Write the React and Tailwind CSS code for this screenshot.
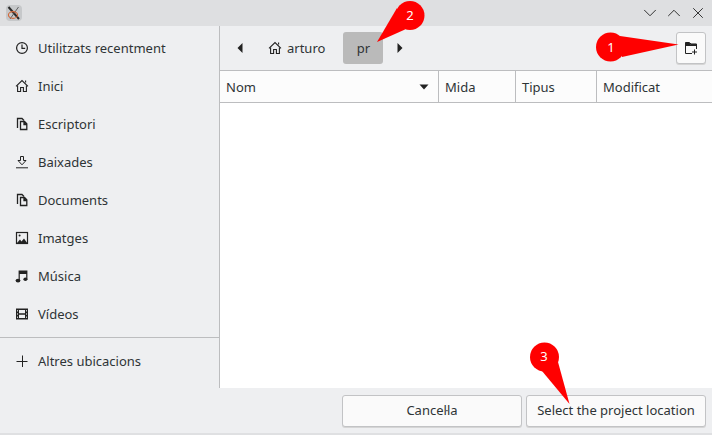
import React from 'react';
import { X, ChevronDown, ChevronUp } from 'lucide-react';

function ClockIcon() {
  return (
    <svg width="14" height="14" viewBox="0 0 14 14" fill="none" stroke="#222" strokeWidth="1.2">
      <circle cx="7" cy="7" r="5.4" />
      <path d="M7 3.5V7.3H10.2" />
    </svg>
  );
}

function HomeIcon() {
  return (
    <svg width="14" height="14" viewBox="0 0 14 14" fill="none" stroke="#222" strokeWidth="1.1">
      <path d="M1 7.3L7 1.5L13 7.3" />
      <path d="M2.6 6.5V12.5H5.6V8.5H8.4V12.5H11.4V6.5" />
      <path d="M10.6 1.5V3.6" />
    </svg>
  );
}

function CopyIcon() {
  return (
    <svg width="14" height="14" viewBox="0 0 14 14" fill="none" stroke="#222" strokeWidth="1.3">
      <path d="M2.5 11V1.5H7L9 3.5" />
      <path d="M5.5 12.5V4.5H9.5L11.8 6.8V12.5Z" />
      <path d="M9 4.5V7.5H12" fill="#222" />
    </svg>
  );
}

function DownloadIcon() {
  return (
    <svg width="14" height="14" viewBox="0 0 14 14" fill="none" stroke="#222" strokeWidth="1">
      <path d="M1 12.8H13" />
      <path d="M5.5 1.5H8.5V5.5H11L7 9.8L3 5.5H5.5Z" />
    </svg>
  );
}

function ImageIcon() {
  return (
    <svg width="14" height="14" viewBox="0 0 14 14" fill="none" stroke="#222" strokeWidth="1.2">
      <rect x="1.5" y="1.5" width="11" height="11" />
      <circle cx="4.6" cy="4.6" r="1" fill="#222" stroke="none" />
      <path d="M2 12L5 8.5L6.5 10.5L9 7.5L12.2 12Z" fill="#222" stroke="none" />
    </svg>
  );
}

function MusicIcon() {
  return (
    <svg width="14" height="14" viewBox="0 0 14 14" fill="#222">
      <path d="M3.6 1.5H12.4V10.5H11.2V5H4.8V11.8H3.6Z" />
      <ellipse cx="3" cy="11.6" rx="2.4" ry="1.9" />
      <ellipse cx="10.4" cy="10.2" rx="2" ry="1.7" />
    </svg>
  );
}

function FilmIcon() {
  return (
    <svg width="14" height="14" viewBox="0 0 14 14" fill="#222">
      <path fillRule="evenodd" d="M1 1.5H13V12.5H1ZM4 3V6.2H10V3ZM4 7.8V11H10V7.8ZM2.2 3V4.6H3V3ZM11 3V4.6H11.8V3ZM2.2 9.4V11H3V9.4ZM11 9.4V11H11.8V9.4ZM2.2 6.2V7.8H3V6.2ZM11 6.2V7.8H11.8V6.2Z" />
    </svg>
  );
}

function PlusIcon() {
  return (
    <svg width="14" height="14" viewBox="0 0 14 14" fill="none" stroke="#222" strokeWidth="1">
      <path d="M1.5 7.5H12.5M7.5 1.5V13" />
    </svg>
  );
}

function NewFolderIcon() {
  return (
    <svg width="14" height="14" viewBox="0 0 14 14" fill="none" stroke="#222" strokeWidth="1">
      <path d="M8 12.5H1.5V1.5H5.5L7 3H12.5V8" />
      <path d="M1.5 4.5H12.5V3.4H6.5L5.2 2H1.5Z" fill="#222" />
      <path d="M10.5 8.5V13.5M8 11H13" />
    </svg>
  );
}

function AppLogo() {
  return (
    <div className="w-4 h-4 bg-[#c6c8ca] rounded-sm flex items-center justify-center">
      <svg width="16" height="16" viewBox="0 0 16 16" fill="none">
        <path d="M2.5 2L13 14" stroke="#2a2a2a" strokeWidth="2" />
        <path d="M12.5 2L4 14" stroke="#555" strokeWidth="0.9" />
        <ellipse cx="7" cy="10" rx="4.6" ry="3.4" stroke="#d2693a" strokeWidth="1.1" />
      </svg>
    </div>
  );
}

function SidebarRow({ icon, label }) {
  return (
    <div className="h-[38px] flex items-center pl-[15px] gap-[9px] shrink-0">
      <span className="w-[14px] flex items-center justify-center">{icon}</span>
      <span className="pt-px">{label}</span>
    </div>
  );
}

function Sidebar() {
  return (
    <aside className="w-[220px] shrink-0 border-r border-[#bcbdbf] flex flex-col pt-[3px]">
      <SidebarRow icon={<ClockIcon />} label="Utilitzats recentment" />
      <SidebarRow icon={<HomeIcon />} label="Inici" />
      <SidebarRow icon={<CopyIcon />} label="Escriptori" />
      <SidebarRow icon={<DownloadIcon />} label="Baixades" />
      <SidebarRow icon={<CopyIcon />} label="Documents" />
      <SidebarRow icon={<ImageIcon />} label="Imatges" />
      <SidebarRow icon={<MusicIcon />} label="Música" />
      <SidebarRow icon={<FilmIcon />} label="Vídeos" />
      <div className="h-px bg-[#bcbdbf] mt-1 mr-[-1px]" />
      <div className="mt-1">
        <SidebarRow icon={<PlusIcon />} label="Altres ubicacions" />
      </div>
    </aside>
  );
}

function PathBar() {
  return (
    <div className="h-[45px] shrink-0 border-b border-[#bcbdbf] flex items-center">
      <svg className="ml-[17px]" width="6" height="10" viewBox="0 0 6 10" fill="#222"><path d="M5.5 0V10L0.5 5Z" /></svg>
      <div className="ml-[25px] flex items-center gap-[5px]">
        <HomeIcon />
        <span className="pt-px">arturo</span>
      </div>
      <div className="ml-[18px] w-10 h-8 pt-px bg-[#bababa] rounded-[3px] flex items-center justify-center">pr</div>
      <svg className="ml-[14px]" width="6" height="10" viewBox="0 0 6 10" fill="#222"><path d="M0.5 0V10L5.5 5Z" /></svg>
      <div className="ml-auto mr-[6px] w-[30px] h-[32px] bg-[#fafafa] border border-[#c2c3c5] rounded-[3px] flex items-center justify-center shadow-[0_1px_0_#d5d5d5]">
        <NewFolderIcon />
      </div>
    </div>
  );
}

function HeaderCell({ w, label, children }) {
  return (
    <div className={`${w} h-full border-r border-[#bcbdbf] flex items-center pl-[6px] pr-3 last:border-r-0`}>
      <span className="pt-[2px]">{label}</span>
      {children}
    </div>
  );
}

function FileList() {
  return (
    <div className="flex-1 flex flex-col bg-white">
      <div className="h-[32px] shrink-0 flex border-b border-[#bcbdbf] bg-[#fcfcfc]">
        <HeaderCell w="w-[219px]" label="Nom">
          <svg className="ml-auto mr-[-3px]" width="10" height="6" viewBox="0 0 10 6" fill="#222"><path d="M0.5 0.5H9.5L5 5.5Z" /></svg>
        </HeaderCell>
        <HeaderCell w="w-[77px]" label="Mida" />
        <HeaderCell w="w-[81px]" label="Tipus" />
        <HeaderCell w="flex-1" label="Modificat" />
      </div>
    </div>
  );
}

function Callouts() {
  return (
    <>
      {/* numbered red markers drawn over the dialog */}
      <svg className="absolute left-0 top-0 pointer-events-none" width="712" height="435" viewBox="0 0 712 435" fill="#ff0000">
        <circle cx="410" cy="15.5" r="14.5" />
        <path d="M397 8L377 42L405 29.5Z" />
        <circle cx="610.5" cy="47" r="14.5" />
        <path d="M620 36L678.5 44.5L622 57Z" />
        <circle cx="544.5" cy="357" r="14.5" />
        <path d="M542 371L569.5 404L558 362Z" />
      </svg>
      <span className="absolute left-[396px] top-[2px] w-7 h-7 flex items-center justify-center text-white text-[13px]">2</span>
      <span className="absolute left-[597px] top-[34px] w-7 h-7 flex items-center justify-center text-white text-[13px]">1</span>
      <span className="absolute left-[530px] top-[343px] w-7 h-7 flex items-center justify-center text-white text-[13px]">3</span>
    </>
  );
}

export default function App() {
  return (
    <div lang="ca" className="relative w-[712px] h-[435px] overflow-hidden flex flex-col bg-[#eeeff1] text-[#2e3436] text-[13px] font-['Noto_Sans',sans-serif]">
      <div className="h-[26px] shrink-0 bg-[#dedfe1] flex items-center pl-[6px] pr-[2px]">
        <AppLogo />
        <div className="ml-auto flex items-center text-[#222]">
          <span className="w-6 flex justify-center"><ChevronDown size={22} strokeWidth={1} /></span>
          <span className="w-6 flex justify-center"><ChevronUp size={22} strokeWidth={1} /></span>
          <span className="w-6 flex justify-center"><X size={18} strokeWidth={1.2} /></span>
        </div>
      </div>
      <div className="h-[362px] shrink-0 flex">
        <Sidebar />
        <main className="flex-1 flex flex-col">
          <PathBar />
          <FileList />
        </main>
      </div>
      <div className="h-[45px] shrink-0 flex items-center justify-end gap-1 pr-[6px]">
        <button className="w-[180px] h-8 pt-px bg-[#fafafa] border border-[#c2c3c5] rounded-[3px] shadow-[0_1px_0_#d5d5d5]">Cancel·la</button>
        <button className="w-[180px] h-8 pt-px bg-[#fafafa] border border-[#c2c3c5] rounded-[3px] shadow-[0_1px_0_#d5d5d5]">Select the project location</button>
      </div>
      <div className="h-[2px] bg-[#dfe0e2]" />
      <Callouts />
    </div>
  );
}
